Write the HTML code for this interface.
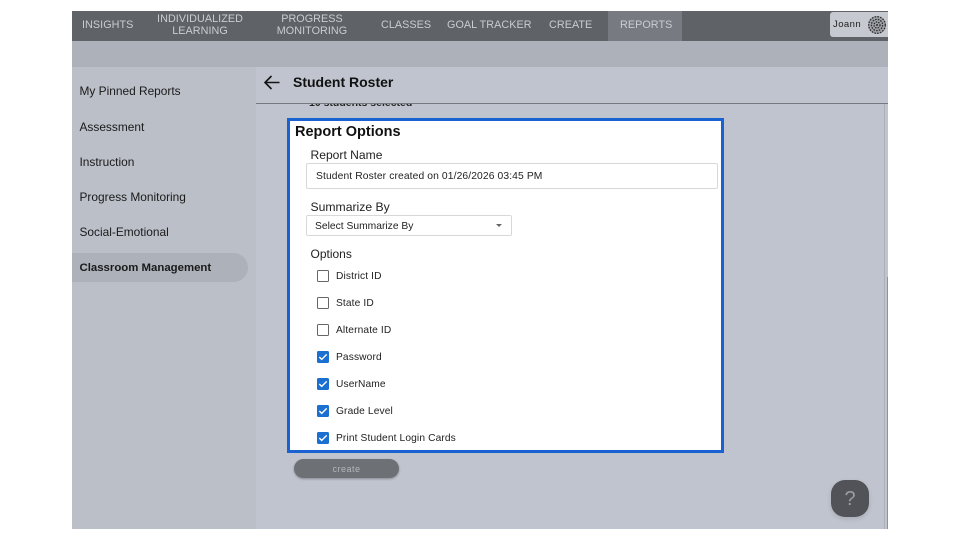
<!DOCTYPE html>
<html><head><meta charset="utf-8"><style>
html,body{margin:0;padding:0;background:#fff}
body{width:960px;height:540px;position:relative;overflow:hidden;font-family:"Liberation Sans",sans-serif;color:#111}
div{position:absolute;box-sizing:border-box}
.t{white-space:nowrap;line-height:14px}
.n{color:#c9ccd1;font-size:10.8px;letter-spacing:.05px;line-height:12px;text-align:center;white-space:nowrap}
.s{left:79.5px;font-size:11.9px;color:#1a1a1a;white-space:nowrap;line-height:14px}
.l{left:336px;font-size:10.2px;letter-spacing:.13px;color:#222;white-space:nowrap;line-height:12px}
.c{left:317px;width:11.5px;height:11.5px;border-radius:1.5px;border:1.3px solid #666;background:#fff}
.k{left:317px;width:11.5px;height:11.5px;border-radius:1.5px;background:#1a6fd0}
.k svg{position:absolute;left:0;top:0}
</style></head><body>
<div style="left:72px;top:11px;width:816px;height:518px;background:#c0c4ce"></div>
<div style="left:72px;top:11px;width:816px;height:30px;background:#5f6266"></div>
<div style="left:72px;top:41px;width:816px;height:26px;background:#adb1b9"></div>
<div style="left:72px;top:67px;width:184px;height:462px;background:#bbbfc8"></div>
<div style="left:608px;top:11px;width:74px;height:30px;background:#777a80"></div>
<div class="n" style="left:82px;top:18px;margin-top:0.5px">INSIGHTS</div>
<div class="n" style="left:150px;width:100px;top:12.5px">INDIVIDUALIZED<br>LEARNING</div>
<div class="n" style="left:262px;width:100px;top:12.5px">PROGRESS<br>MONITORING</div>
<div class="n" style="left:381px;top:18.5px">CLASSES</div>
<div class="n" style="left:447px;top:18.5px">GOAL TRACKER</div>
<div class="n" style="left:549px;top:18.5px">CREATE</div>
<div class="n" style="left:620px;top:18.5px">REPORTS</div>
<div style="left:830px;top:12px;width:58px;height:25px;background:#c6c9cf;border-radius:3px 0 0 3px"></div>
<div class="t" style="left:833px;top:18px;font-size:9.5px;letter-spacing:.45px;color:#222">Joann</div>
<svg style="position:absolute;left:867px;top:15px" width="20" height="20" viewBox="0 0 20 20"><circle cx="10" cy="10" r="9" fill="#a0a3a8"/><circle cx="10" cy="10" r="8.3" fill="none" stroke="#2e2e30" stroke-width="1.3" stroke-dasharray="1.6 1.2"/><circle cx="10" cy="10" r="5.6" fill="none" stroke="#2e2e30" stroke-width="1.3" stroke-dasharray="1.6 1.1"/><circle cx="10" cy="10" r="3" fill="none" stroke="#2e2e30" stroke-width="1.3" stroke-dasharray="1.5 1"/><circle cx="10" cy="10" r="1" fill="#2e2e30"/></svg>

<div class="s" style="top:84px">My Pinned Reports</div>
<div class="s" style="top:120px">Assessment</div>
<div class="s" style="top:155px">Instruction</div>
<div class="s" style="top:190px">Progress Monitoring</div>
<div class="s" style="top:225px">Social-Emotional</div>
<div style="left:72px;top:253px;width:176px;height:29px;background:#adb1b9;border-radius:0 15px 15px 0"></div>
<div class="s" style="top:260.5px;font-weight:bold;font-size:11.4px">Classroom Management</div>

<div class="t" style="left:309px;top:96px;font-size:10.5px;font-weight:bold;color:#222">10 students selected</div>
<div style="left:256px;top:67px;width:632px;height:36px;background:#c0c4ce"></div>
<div style="left:256px;top:103px;width:632px;height:1px;background:#75787e"></div>
<svg style="position:absolute;left:263px;top:74px" width="18" height="16" viewBox="0 0 18 16"><path d="M16.5 8.5H2M8.5 2L2 8.5l6.5 6.5" fill="none" stroke="#151515" stroke-width="1.6"/></svg>
<div class="t" style="left:293px;top:75px;font-size:14px;font-weight:bold;color:#111">Student Roster</div>

<div style="left:884px;top:104px;width:1px;height:425px;background:#acb0b8"></div>
<div style="left:887px;top:277px;width:1px;height:252px;background:#8f9299"></div>

<div style="left:287px;top:118px;width:437px;height:335px;background:#fff;border:3px solid #1a62d2"></div>
<div class="t" style="left:295px;top:125px;font-size:14.5px;font-weight:bold;color:#111">Report Options</div>
<div class="t" style="left:310.5px;top:148px;font-size:12.1px;color:#222">Report Name</div>
<div style="left:306px;top:163px;width:412px;height:26px;border:1px solid #d8d8d8;border-radius:2px"></div>
<div class="t" style="left:316px;top:170px;font-size:10.3px;letter-spacing:.11px;color:#222">Student Roster created on 01/26/2026 03:45 PM</div>
<div class="t" style="left:310.5px;top:200px;font-size:12.2px;color:#222">Summarize By</div>
<div style="left:306px;top:215px;width:206px;height:21px;border:1px solid #d8d8d8;border-radius:2px"></div>
<div class="t" style="left:315px;top:220px;font-size:10.3px;letter-spacing:0;color:#222">Select Summarize By</div>
<div style="left:496px;top:224px;width:0;height:0;border-left:3.5px solid transparent;border-right:3.5px solid transparent;border-top:3.5px solid #666"></div>
<div class="t" style="left:310.5px;top:247px;font-size:12px;color:#222">Options</div>

<div class="c" style="top:270px"></div><div class="l" style="top:271px">District ID</div>
<div class="c" style="top:297px"></div><div class="l" style="top:298px">State ID</div>
<div class="c" style="top:324px"></div><div class="l" style="top:325px">Alternate ID</div>
<div class="k" style="top:351px"><svg width="12" height="12" viewBox="0 0 12 12"><path d="M2.3 6l2.4 2.4 5-5" fill="none" stroke="#fff" stroke-width="1.4"/></svg></div><div class="l" style="top:352px">Password</div>
<div class="k" style="top:378px"><svg width="12" height="12" viewBox="0 0 12 12"><path d="M2.3 6l2.4 2.4 5-5" fill="none" stroke="#fff" stroke-width="1.4"/></svg></div><div class="l" style="top:379px">UserName</div>
<div class="k" style="top:405px"><svg width="12" height="12" viewBox="0 0 12 12"><path d="M2.3 6l2.4 2.4 5-5" fill="none" stroke="#fff" stroke-width="1.4"/></svg></div><div class="l" style="top:406px">Grade Level</div>
<div class="k" style="top:432px"><svg width="12" height="12" viewBox="0 0 12 12"><path d="M2.3 6l2.4 2.4 5-5" fill="none" stroke="#fff" stroke-width="1.4"/></svg></div><div class="l" style="top:433px">Print Student Login Cards</div>

<div style="left:294px;top:459px;width:105px;height:19px;background:#6d7075;border-radius:10px;box-shadow:0 1px 2px rgba(0,0,0,.3)"></div>
<div class="t" style="left:294px;width:105px;text-align:center;top:461.5px;font-size:9px;letter-spacing:.5px;color:#b4b7bc">create</div>

<div style="left:831px;top:480px;width:38px;height:37px;background:#515358;border-radius:14px;box-shadow:0 2px 5px rgba(0,0,0,.12)"></div>
<div class="t" style="left:831px;width:38px;text-align:center;top:489px;font-size:20px;line-height:20px;color:#9a9da2">?</div>
</body></html>
